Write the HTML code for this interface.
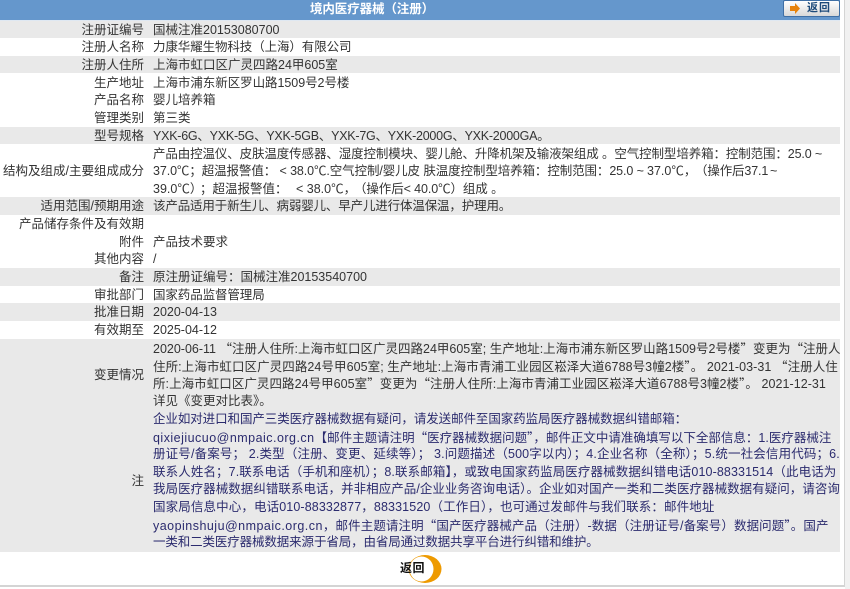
<!DOCTYPE html>
<html lang="zh"><head><meta charset="utf-8"><style>
html,body{margin:0;padding:0;width:850px;height:589px;overflow:hidden;background:#fff}
body{position:relative;font:12.5px/18px "Liberation Sans","Noto Sans CJK SC",sans-serif;color:#333}
.b{position:absolute;left:0;width:840px;background:#e9e9e9}
.t,.r{position:absolute;white-space:nowrap;height:18px}
.t{left:153px}
.r{right:706px;text-align:right}
.n{color:#2b2b6e}
.e{letter-spacing:.48px}
i{font-style:normal;font-family:"Noto Sans CJK SC",sans-serif}
</style></head><body>
<div style="position:absolute;left:0;top:0;width:840px;height:20px;background:#6597cc"></div>
<div style="position:absolute;left:0;top:20px;width:840px;height:1px;background:#dfe8f2"></div>
<div style="position:absolute;left:310px;top:0;color:#fff;font-weight:bold;white-space:nowrap;line-height:19px;letter-spacing:-.1px">境内医疗器械（注册）</div>
<div style="position:absolute;left:783px;top:0;width:55px;height:15px;border:1px solid #3f6fa5;border-radius:2px;background:linear-gradient(#fff,#d8d8d8)"></div>
<svg style="position:absolute;left:790px;top:3px" width="11" height="11"><path d="M0 3H5V0L10 5.500L5 11V8H0Z" fill="#e8830c"/></svg>
<div style="position:absolute;left:807px;top:-1px;font-weight:bold;color:#1d4a7a;white-space:nowrap;letter-spacing:1px;font-size:11px">返回</div>

<div class="b" style="top:21px;height:17px"></div>
<div class="b" style="top:56px;height:17px"></div>
<div class="b" style="top:127px;height:17px"></div>
<div class="b" style="top:197px;height:18px"></div>
<div class="b" style="top:268px;height:18px"></div>
<div class="b" style="top:303px;height:18px"></div>
<div class="b" style="top:339px;height:213px"></div>

<div class="r" style="top:21px">注册证编号</div><div class="t" style="top:21px">国械注准20153080700</div>
<div class="r" style="top:38px">注册人名称</div><div class="t" style="top:38px;letter-spacing:-.1px">力康华耀生物科技（上海）有限公司</div>
<div class="r" style="top:56px">注册人住所</div><div class="t" style="top:56px">上海市虹口区广灵四路24甲605室</div>
<div class="r" style="top:74px">生产地址</div><div class="t" style="top:74px;letter-spacing:-.05px">上海市浦东新区罗山路1509号2号楼</div>
<div class="r" style="top:91px">产品名称</div><div class="t" style="top:91px">婴儿培养箱</div>
<div class="r" style="top:109px">管理类别</div><div class="t" style="top:109px">第三类</div>
<div class="r" style="top:127px">型号规格</div><div class="t" style="top:127px;letter-spacing:-.24px">YXK-6G、YXK-5G、YXK-5GB、YXK-7G、YXK-2000G、YXK-2000GA。</div>
<div class="r" style="top:162px">结构及组成/主要组成成分</div>
<div class="t" style="top:145px;letter-spacing:-.12px">产品由控温仪、皮肤温度传感器、湿度控制模块、婴儿舱、升降机架及输液架组成 。空气控制型培养箱：控制范围：25.0 ~</div>
<div class="t" style="top:162px;letter-spacing:-.1px">37.0℃；超温报警值： &lt; 38.0℃.空气控制/婴儿皮 肤温度控制型培养箱：控制范围：25.0 ~</div>
<div class="t" style="top:162px;left:647px">37.0℃，</div>
<div class="t" style="top:162px;left:695px;letter-spacing:-.15px">（操作后37.1</div>
<div class="t" style="top:162px;left:770px">~</div>
<div class="t" style="top:180px">39.0℃）</div>
<div class="t" style="top:180px;left:200px">；超温报警值：</div>
<div class="t" style="top:180px;left:296px">&lt; 38.0℃，</div>
<div class="t" style="top:180px;left:354px;letter-spacing:-.1px">（操作后&lt; 40.0℃）组成 。</div>
<div class="r" style="top:197px">适用范围/预期用途</div><div class="t" style="top:197px;letter-spacing:-.15px">该产品适用于新生儿、病弱婴儿、早产儿进行体温保温，护理用。</div>
<div class="r" style="top:215px">产品储存条件及有效期</div>
<div class="r" style="top:233px">附件</div><div class="t" style="top:233px">产品技术要求</div>
<div class="r" style="top:250px">其他内容</div><div class="t" style="top:250px">/</div>
<div class="r" style="top:268px">备注</div><div class="t" style="top:268px">原注册证编号：国械注准20153540700</div>
<div class="r" style="top:286px">审批部门</div><div class="t" style="top:286px;letter-spacing:-.1px">国家药品监督管理局</div>
<div class="r" style="top:303px">批准日期</div><div class="t" style="top:303px">2020-04-13</div>
<div class="r" style="top:321px">有效期至</div><div class="t" style="top:321px">2025-04-12</div>

<div class="r" style="top:366px">变更情况</div>
<div class="t" style="top:339px">2020-06-11 <i>“</i>注册人住所:上海市虹口区广灵四路24甲605室; 生产地址:上海市浦东新区罗山路1509号2号楼<i>”</i>变更为<i>“</i>注册人</div>
<div class="t" style="top:357px;letter-spacing:.07px">住所:上海市虹口区广灵四路24号甲605室; 生产地址:上海市青浦工业园区崧泽大道6788号3幢2楼<i>”</i>。 2021-03-31 <i>“</i>注册人住</div>
<div class="t" style="top:374px;letter-spacing:.05px">所:上海市虹口区广灵四路24号甲605室<i>”</i>变更为<i>“</i>注册人住所:上海市青浦工业园区崧泽大道6788号3幢2楼<i>”</i>。 2021-12-31</div>
<div class="t" style="top:392px">详见《变更对比表》。</div>

<div class="r" style="top:472px">注</div>
<div class="t n" style="top:410px;letter-spacing:-.08px">企业如对进口和国产三类医疗器械数据有疑问，请发送邮件至国家药监局医疗器械数据纠错邮箱：</div>
<div class="t n" style="top:428px"><span class="e">qixiejiucuo@nmpaic.org.cn</span>【邮件主题请注明<i>“</i>医疗器械数据问题<i>”</i>，邮件正文中请准确填写以下全部信息：1.医疗器械注</div>
<div class="t n" style="top:445px;letter-spacing:.15px">册证号/备案号； 2.类型（注册、变更、延续等）； 3.问题描述（500字以内）；4.企业名称（全称）；5.统一社会信用代码；6.</div>
<div class="t n" style="top:463px;letter-spacing:.11px">联系人姓名；7.联系电话（手机和座机）；8.联系邮箱】，或致电国家药监局医疗器械数据纠错电话010-88331514（此电话为</div>
<div class="t n" style="top:480px;letter-spacing:.04px">我局医疗器械数据纠错联系电话，并非相应产品/企业业务咨询电话）。企业如对国产一类和二类医疗器械数据有疑问，请咨询</div>
<div class="t n" style="top:498px;letter-spacing:.12px">国家局信息中心，电话010-88332877，88331520（工作日），也可通过发邮件与我们联系：邮件地址</div>
<div class="t n" style="top:516px;letter-spacing:.1px"><span class="e">yaopinshuju@nmpaic.org.cn</span>，邮件主题请注明<i>“</i>国产医疗器械产品（注册）-数据（注册证号/备案号）数据问题<i>”</i>。国产</div>
<div class="t n" style="top:533px;letter-spacing:-.12px">一类和二类医疗器械数据来源于省局，由省局通过数据共享平台进行纠错和维护。</div>

<svg style="position:absolute;left:405px;top:554px" width="38" height="30"><ellipse cx="20" cy="15" rx="16.500" ry="14" fill="#ee9a00"/><ellipse cx="16.500" cy="15" rx="12" ry="12.500" fill="#fff"/></svg>
<div style="position:absolute;left:400px;top:559px;font-weight:bold;color:#111;white-space:nowrap;letter-spacing:.5px;font-size:12px">返回</div>

<div style="position:absolute;left:0;top:585px;width:845px;height:2px;background:#d4d4d4"></div>
<div style="position:absolute;left:844px;top:0;width:1px;height:587px;background:#d4d4d4"></div>
<div style="position:absolute;left:845px;top:0;width:5px;height:589px;background:#f1f1f1"></div>
</body></html>
